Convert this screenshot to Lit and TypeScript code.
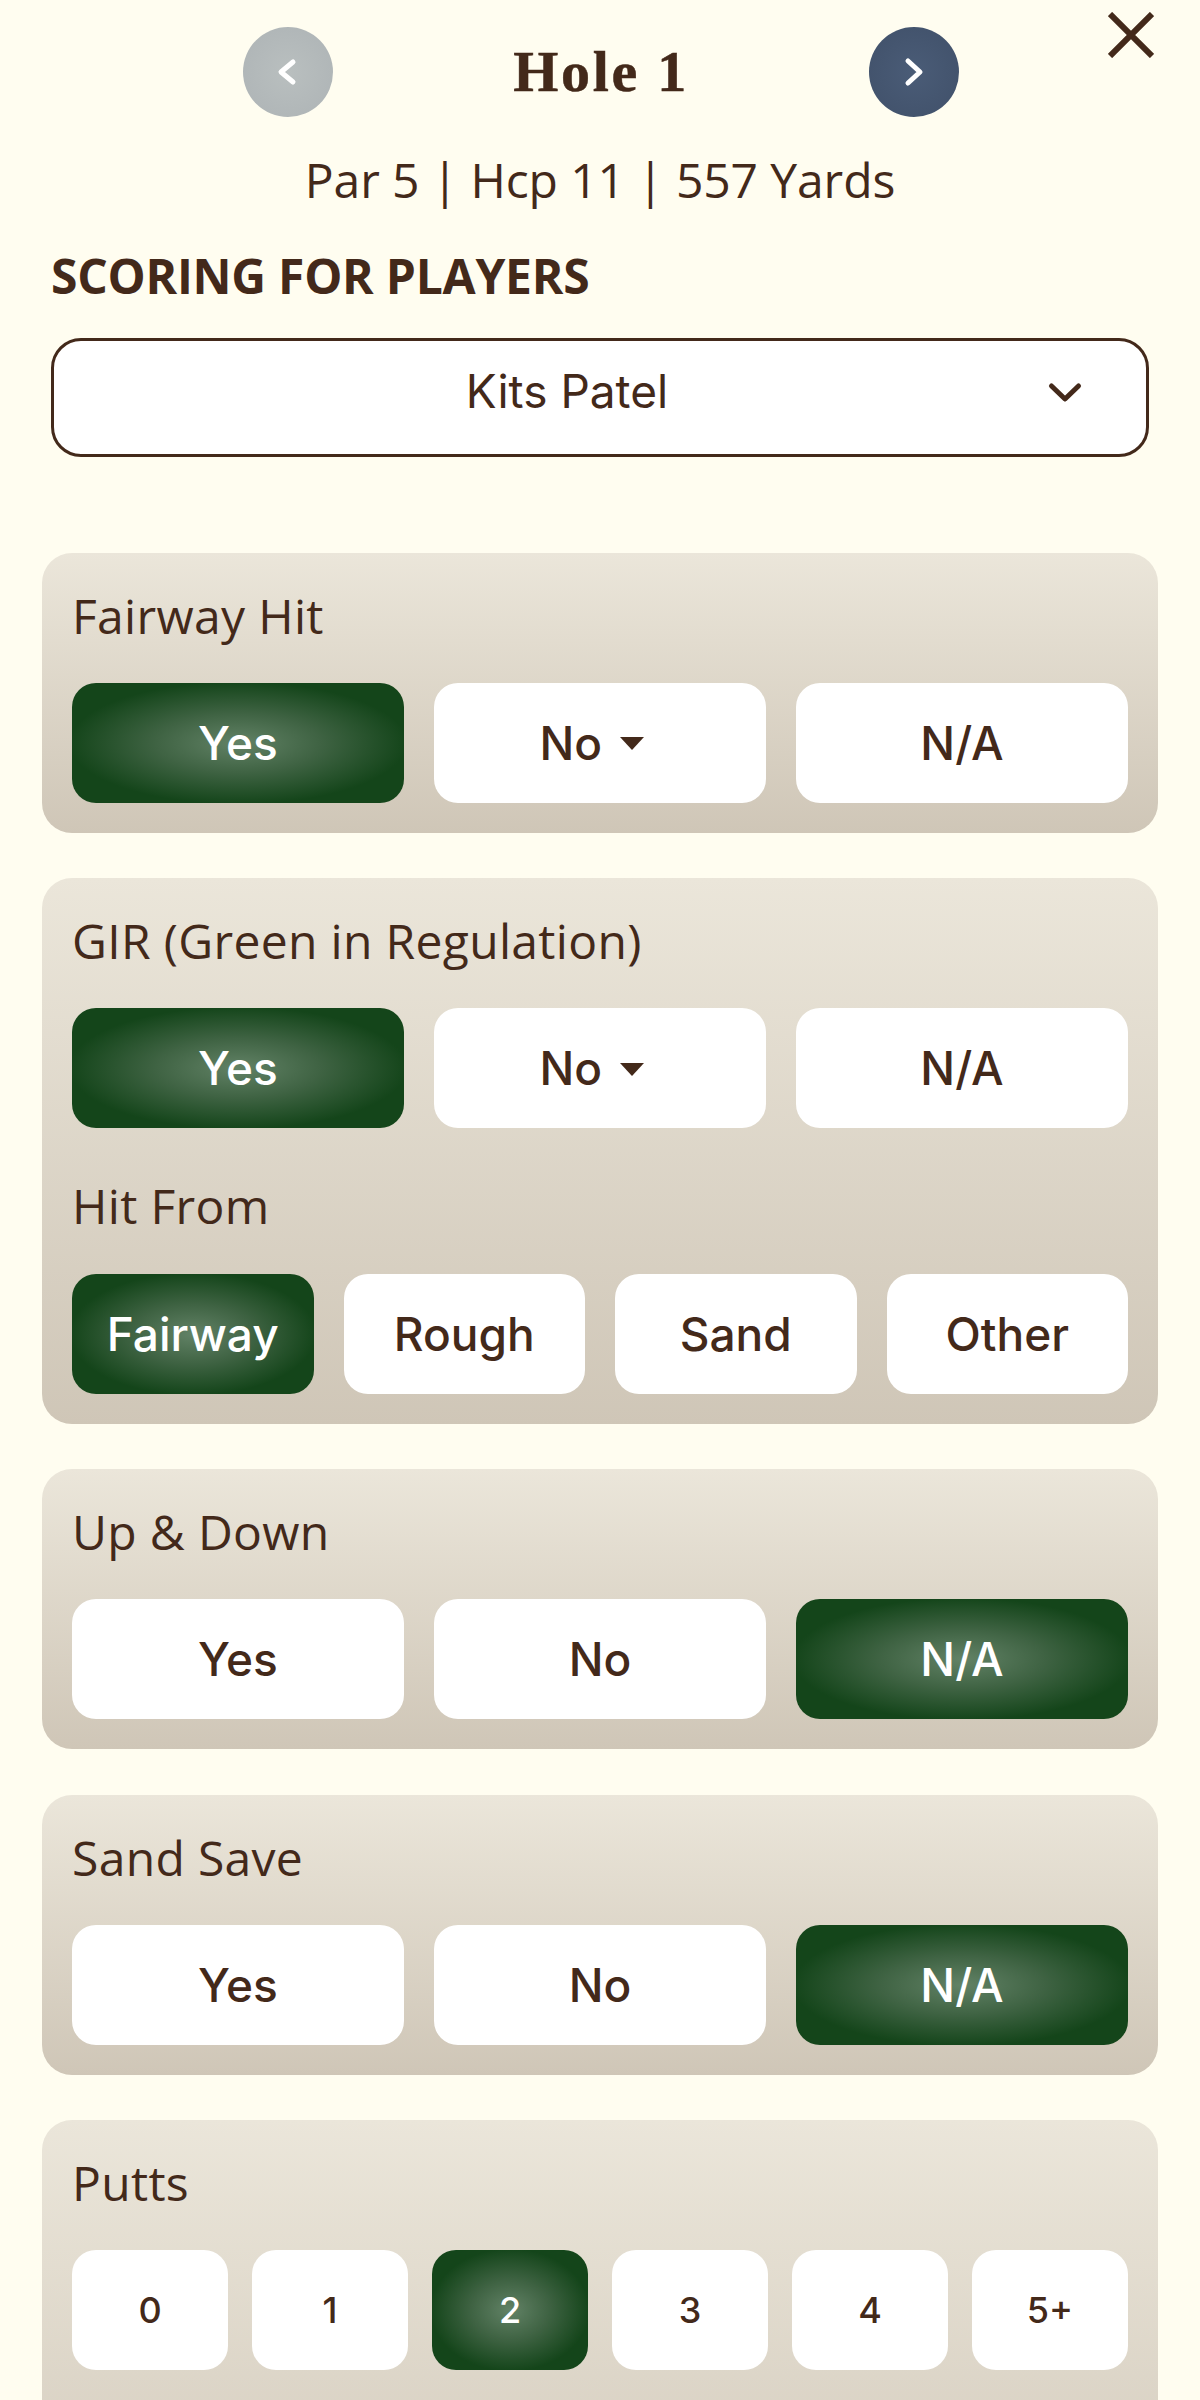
import { LitElement, html, css } from "lit";
import { customElement } from "lit/decorators.js";

type Opt = { label: string; on?: boolean; caret?: boolean };

const yn = (on: number, caret: boolean): Opt[] => [
  { label: "Yes", on: on === 0 },
  { label: "No", on: on === 1, caret },
  { label: "N/A", on: on === 2 },
];

@customElement("app-root")
export class AppRoot extends LitElement {
  static styles = css`
    :host {
      display: block;
      width: 1200px;
      height: 2400px;
      overflow: hidden;
      background: #fffdf0;
      color: #43291a;
      font-family: "Open Sans", sans-serif;
      position: relative;
    }
    .close {
      position: absolute;
      left: 1108px;
      top: 12px;
      width: 46px;
      height: 46px;
    }
    .head {
      display: grid;
      grid-template-columns: 90px 536px 90px;
      justify-content: center;
      align-items: center;
      padding-top: 27px;
      padding-left: 2px;
    }
    .circle {
      width: 90px;
      height: 90px;
      border-radius: 50%;
      display: flex;
      align-items: center;
      justify-content: center;
    }
    .prev { background: radial-gradient(circle, #b9bfbf 0%, #adb3b5 100%); }
    .next { background: radial-gradient(circle, #4a5c77 0%, #405069 100%); }
    .circle svg { width: 24px; height: 30px; }
    .prev svg { margin-right: 3px; }
    h1 {
      margin: 0;
      text-align: center;
      font-family: "Liberation Serif", serif;
      font-weight: 700;
      font-size: 58px;
      letter-spacing: 2.7px;
      line-height: 90px;
      -webkit-text-stroke: 0.5px #43291a;
    }
    .sub {
      margin-top: 30px;
      text-align: center;
      font-size: 48px;
      line-height: 65px;
      font-weight: 400;
      letter-spacing: -0.1px;
    }
    .title {
      margin: 31px 0 0 51px;
      font-size: 48px;
      line-height: 65px;
      font-weight: 700;
      letter-spacing: -0.25px;
    }
    .select {
      margin: 29.5px 51px 0;
      height: 119px;
      box-sizing: border-box;
      padding-bottom: 12px;
      border: 3px solid #43291a;
      border-radius: 30px;
      background: #fff;
      display: grid;
      grid-template-columns: 1fr 100px;
      align-items: center;
      font-family: Inter, sans-serif;
      font-size: 46px;
    }
    .select span { text-align: center; padding-left: 34px; }
    .select svg { width: 36px; height: 24px; margin: 3px 0 0 1px; }
    .cards {
      margin: 96px 42px 0;
      display: flex;
      flex-direction: column;
      gap: 45.5px;
    }
    .card {
      border-radius: 30px;
      padding: 30px;
      background: linear-gradient(180deg, #ebe6da 0%, #cfc6b7 100%);
    }
    .card.last { padding-bottom: 260px; }
    .label {
      font-size: 48px;
      letter-spacing: 0.33px;
      line-height: 65px;
      margin-bottom: 35px;
    }
    .label.second { margin-top: 45px; margin-bottom: 35.5px; }
    .row { display: flex; gap: 30px; }
    .row.six { gap: 24px; }
    .btn {
      flex: 1 1 0;
      height: 120px;
      border-radius: 24px;
      background: #fff;
      display: flex;
      align-items: center;
      justify-content: center;
      font-family: Inter, sans-serif;
      font-weight: 450;
      font-size: 46px;
    }
    .row.six .btn { font-size: 36px; }
    .btn.on {
      color: #fff;
      background: radial-gradient(ellipse at center, #628266 0%, #3f6343 35%, #14451a 72%);
    }
    .caret {
      width: 0;
      height: 0;
      margin: 2px 16.5px 0 18px;
      border-left: 12px solid transparent;
      border-right: 12px solid transparent;
      border-top: 13px solid #43291a;
    }
  `;

  private row(opts: Opt[], cls = "") {
    return html`<div class="row ${cls}">
      ${opts.map(
        (o) => html`<div class="btn ${o.on ? "on" : ""}">
          ${o.label}${o.caret ? html`<span class="caret"></span>` : ""}
        </div>`
      )}
    </div>`;
  }

  render() {
    return html`
      <svg class="close" viewBox="0 0 46 46" fill="none" stroke="#43291a" stroke-width="6">
        <path d="M2 2 L44 44 M44 2 L2 44" />
      </svg>
      <div class="head">
        <div class="circle prev">
          <svg viewBox="0 0 24 30" fill="none" stroke="#fff" stroke-width="5" stroke-linecap="round" stroke-linejoin="round">
            <path d="M18 5 L6 15 L18 25" />
          </svg>
        </div>
        <h1>Hole 1</h1>
        <div class="circle next">
          <svg viewBox="0 0 24 30" fill="none" stroke="#fff" stroke-width="5" stroke-linecap="round" stroke-linejoin="round">
            <path d="M6 4 L18 15 L6 26" />
          </svg>
        </div>
      </div>
      <div class="sub">Par 5 | Hcp 11 | 557 Yards</div>
      <div class="title">SCORING FOR PLAYERS</div>
      <div class="select">
        <span>Kits Patel</span>
        <svg viewBox="0 0 36 24" fill="none" stroke="#43291a" stroke-width="5" stroke-linecap="round" stroke-linejoin="round">
          <path d="M4.5 5 L18 18 L31.5 5" />
        </svg>
      </div>
      <div class="cards">
        <div class="card">
          <div class="label">Fairway Hit</div>
          ${this.row(yn(0, true))}
        </div>
        <div class="card">
          <div class="label">GIR (Green in Regulation)</div>
          ${this.row(yn(0, true))}
          <div class="label second">Hit From</div>
          ${this.row([{ label: "Fairway", on: true }, { label: "Rough" }, { label: "Sand" }, { label: "Other" }])}
        </div>
        <div class="card">
          <div class="label">Up &amp; Down</div>
          ${this.row(yn(2, false))}
        </div>
        <div class="card">
          <div class="label">Sand Save</div>
          ${this.row(yn(2, false))}
        </div>
        <div class="card last">
          <div class="label">Putts</div>
          ${this.row(
            ["0", "1", "2", "3", "4", "5+"].map((label) => ({ label, on: label === "2" })),
            "six"
          )}
        </div>
      </div>
    `;
  }
}
